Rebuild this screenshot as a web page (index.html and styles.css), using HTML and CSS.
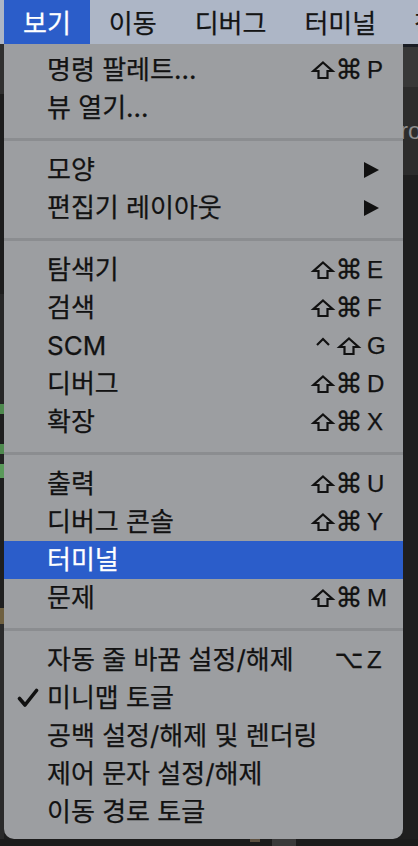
FILE: index.html
```html
<!DOCTYPE html>
<html lang="ko">
<head>
<meta charset="utf-8">
<title>보기 메뉴</title>
<link rel="stylesheet" href="styles.css">
</head>
<body>
<div class="screen">
  <nav class="menubar">
    <span class="mb-item active">보기</span>
    <span class="mb-item">이동</span>
    <span class="mb-item">디버그</span>
    <span class="mb-item">터미널</span>
    <span class="mb-item">창</span>
  </nav>
  <div class="workspace">
    <div class="gutter-left">
      <span class="gl gl-a"></span>
      <span class="gl gl-b"></span>
      <span class="gl gl-c"></span>
      <span class="gl gl-green"></span>
      <span class="gl gl-d"></span>
      <span class="gl gl-green"></span>
      <span class="gl gl-e"></span>
      <span class="gl gl-green2"></span>
      <span class="gl gl-f"></span>
      <span class="gl gl-tan"></span>
      <span class="gl gl-g"></span>
    </div>
    <div class="dropdown">
      <div class="group">
        <div class="row"><span class="label">명령 팔레트...</span><span class="mods"><svg class="mod shift" viewBox="0 0 22 18"><path d="M11 1.5 L20.5 10 H15.5 V17 H6.5 V10 H1.5 Z"/></svg><span class="mod cmd">⌘</span></span><span class="key">P</span></div>
        <div class="row"><span class="label">뷰 열기...</span></div>
      </div>
      <div class="sep"></div>
      <div class="group">
        <div class="row"><span class="label">모양</span><svg class="arrow" viewBox="0 0 15 16"><polygon points="0,0 15,8 0,16"/></svg></div>
        <div class="row"><span class="label">편집기 레이아웃</span><svg class="arrow" viewBox="0 0 15 16"><polygon points="0,0 15,8 0,16"/></svg></div>
      </div>
      <div class="sep"></div>
      <div class="group">
        <div class="row"><span class="label">탐색기</span><span class="mods"><svg class="mod shift" viewBox="0 0 22 18"><path d="M11 1.5 L20.5 10 H15.5 V17 H6.5 V10 H1.5 Z"/></svg><span class="mod cmd">⌘</span></span><span class="key">E</span></div>
        <div class="row"><span class="label">검색</span><span class="mods"><svg class="mod shift" viewBox="0 0 22 18"><path d="M11 1.5 L20.5 10 H15.5 V17 H6.5 V10 H1.5 Z"/></svg><span class="mod cmd">⌘</span></span><span class="key">F</span></div>
        <div class="row"><span class="label">SCM</span><span class="mods"><svg class="mod ctrl" viewBox="0 0 22 18"><path d="M5 8 L11 2 L17 8"/></svg><svg class="mod shift" viewBox="0 0 22 18"><path d="M11 1.5 L20.5 10 H15.5 V17 H6.5 V10 H1.5 Z"/></svg></span><span class="key">G</span></div>
        <div class="row"><span class="label">디버그</span><span class="mods"><svg class="mod shift" viewBox="0 0 22 18"><path d="M11 1.5 L20.5 10 H15.5 V17 H6.5 V10 H1.5 Z"/></svg><span class="mod cmd">⌘</span></span><span class="key">D</span></div>
        <div class="row"><span class="label">확장</span><span class="mods"><svg class="mod shift" viewBox="0 0 22 18"><path d="M11 1.5 L20.5 10 H15.5 V17 H6.5 V10 H1.5 Z"/></svg><span class="mod cmd">⌘</span></span><span class="key">X</span></div>
      </div>
      <div class="sep"></div>
      <div class="group">
        <div class="row"><span class="label">출력</span><span class="mods"><svg class="mod shift" viewBox="0 0 22 18"><path d="M11 1.5 L20.5 10 H15.5 V17 H6.5 V10 H1.5 Z"/></svg><span class="mod cmd">⌘</span></span><span class="key">U</span></div>
        <div class="row"><span class="label">디버그 콘솔</span><span class="mods"><svg class="mod shift" viewBox="0 0 22 18"><path d="M11 1.5 L20.5 10 H15.5 V17 H6.5 V10 H1.5 Z"/></svg><span class="mod cmd">⌘</span></span><span class="key">Y</span></div>
        <div class="row selected"><span class="label">터미널</span></div>
        <div class="row"><span class="label">문제</span><span class="mods"><svg class="mod shift" viewBox="0 0 22 18"><path d="M11 1.5 L20.5 10 H15.5 V17 H6.5 V10 H1.5 Z"/></svg><span class="mod cmd">⌘</span></span><span class="key">M</span></div>
      </div>
      <div class="sep"></div>
      <div class="group">
        <div class="row"><span class="label">자동 줄 바꿈 설정/해제</span><span class="mods"><span class="mod opt">⌥</span></span><span class="key">Z</span></div>
        <div class="row"><svg class="check" viewBox="0 0 22 20"><path d="M2.5 10.5 L8 17 L19.5 2.5"/></svg><span class="label">미니맵 토글</span></div>
        <div class="row"><span class="label">공백 설정/해제 및 렌더링</span></div>
        <div class="row"><span class="label">제어 문자 설정/해제</span></div>
        <div class="row"><span class="label">이동 경로 토글</span></div>
      </div>
    </div>
    <div class="editor-right">
      <div class="er-line"></div>
      <div class="er-tabs"></div>
      <div class="er-crumb"><span class="er-text">ro</span></div>
      <div class="er-body"></div>
    </div>
  </div>
  <div class="bottom-strip">
    <span class="bs-spot"></span>
    <span class="bs-block"></span>
  </div>
</div>
</body>
</html>
```

FILE: styles.css
```css
* { box-sizing: border-box; }

html, body {
  margin: 0;
  padding: 0;
  background: #1e1e1e;
}

body {
  width: 418px;
  height: 846px;
  overflow: hidden;
  font-family: Inter, "Noto Sans CJK KR", sans-serif;
  color: #111;
}

.screen {
  display: flex;
  flex-direction: column;
  height: 846px;
}

/* ---------- menu bar ---------- */
.menubar {
  display: flex;
  height: 44px;
  padding-left: 4px;
  background: #adb6c6;
  white-space: nowrap;
  overflow: hidden;
  flex: none;
}

.mb-item {
  padding: 0 19px;
  font-family: "Noto Sans CJK KR", sans-serif;
  font-size: 26px;
  line-height: 44px;
  color: #141414;
  -webkit-text-stroke: 0.25px currentColor;
}

.mb-item.active {
  background: #2b5dc9;
  color: #fff;
}

/* ---------- workspace ---------- */
.workspace {
  display: grid;
  grid-template-columns: 4px 399px 1fr;
  flex: none;
  height: 795px;
}

.gutter-left {
  display: flex;
  flex-direction: column;
  background: #1f1f1f;
}

.gl { display: block; flex: none; }
.gl-a { height: 50px; background: #2f2f2f; }
.gl-b { height: 200px; background: #1c1c1c; }
.gl-c { height: 110px; background: #262626; }
.gl-green { height: 10px; background: #4f8a4f; }
.gl-d { height: 30px; background: #1e1e1e; }
.gl-e { height: 10px; background: #222; }
.gl-green2 { height: 14px; background: #5a9a5a; }
.gl-f { height: 130px; background: #1f1f1f; }
.gl-tan { height: 16px; background: #6f6040; }
.gl-g { height: 215px; background: #2a2a2a; }

.editor-right {
  display: flex;
  flex-direction: column;
  overflow: hidden;
}

.er-line { height: 3px; background: #1a1d24; }
.er-tabs { height: 40px; background: #383838; }
.er-crumb {
  height: 88px;
  background: #2c2c2c;
  overflow: hidden;
}
.er-text {
  display: block;
  margin-left: -3px;
  margin-top: 30px;
  font-family: "Liberation Sans", sans-serif;
  font-size: 24px;
  line-height: 28px;
  color: #8e8e8e;
}
.er-body { flex: 1; background: #1f1f1f; }

.bottom-strip {
  display: flex;
  flex: 1;
  background: #1c1c1c;
}
.bs-spot { width: 10px; margin-left: 250px; background: #5c5040; height: 3px; }
.bs-block { width: 24px; margin-left: 12px; background: #3a3a3a; }

/* ---------- dropdown ---------- */
.dropdown {
  background: #9c9ea1;
  padding: 7px 0 8px;
  border-radius: 0 0 10px 10px;
  align-self: start;
  display: flex;
  flex-direction: column;
}

.sep {
  height: 3px;
  margin: 11px 0 10px;
  background: #8b8d90;
}

.row {
  display: grid;
  grid-template-columns: 43px 1fr auto 24px;
  align-items: center;
  height: 38px;
  padding-right: 12px;
  font-family: Inter, "Noto Sans CJK KR", sans-serif;
  font-size: 26px;
  line-height: 38px;
  color: #121212;
  white-space: nowrap;
}

.row.selected {
  background: #2b5dca;
  color: #fff;
}

.label {
  grid-column: 2;
  grid-row: 1;
  -webkit-text-stroke: 0.25px currentColor;
}

.mods {
  grid-column: 3;
  grid-row: 1;
  justify-self: end;
  display: flex;
  align-items: center;
  margin-right: 5px;
}

.mod {
  width: 26px;
  display: flex;
  justify-content: center;
  text-align: center;
  overflow: visible;
}

svg.mod {
  height: 18px;
  fill: none;
  stroke: #111;
  stroke-width: 2.2;
  stroke-linejoin: miter;
}

svg.ctrl {
  stroke-width: 2.2;
  stroke-linecap: butt;
}

.cmd, .opt {
  font-family: "DejaVu Sans", sans-serif;
  font-size: 27px;
  line-height: 38px;
  -webkit-text-stroke: 0.3px currentColor;
}

.opt {
  font-size: 25px;
}

.key {
  grid-column: 4;
  grid-row: 1;
  font-family: "Liberation Sans", sans-serif;
  font-size: 24px;
  -webkit-text-stroke: 0.25px currentColor;
}

.arrow {
  grid-column: 3 / 5;
  grid-row: 1;
  justify-self: end;
  margin-right: 12px;
  width: 15px;
  height: 16px;
  fill: #111;
}

.check {
  grid-column: 1;
  grid-row: 1;
  justify-self: start;
  margin-left: 13px;
  width: 22px;
  height: 20px;
  fill: none;
  stroke: #111;
  stroke-width: 3.6;
  stroke-linecap: round;
  stroke-linejoin: round;
}
```
